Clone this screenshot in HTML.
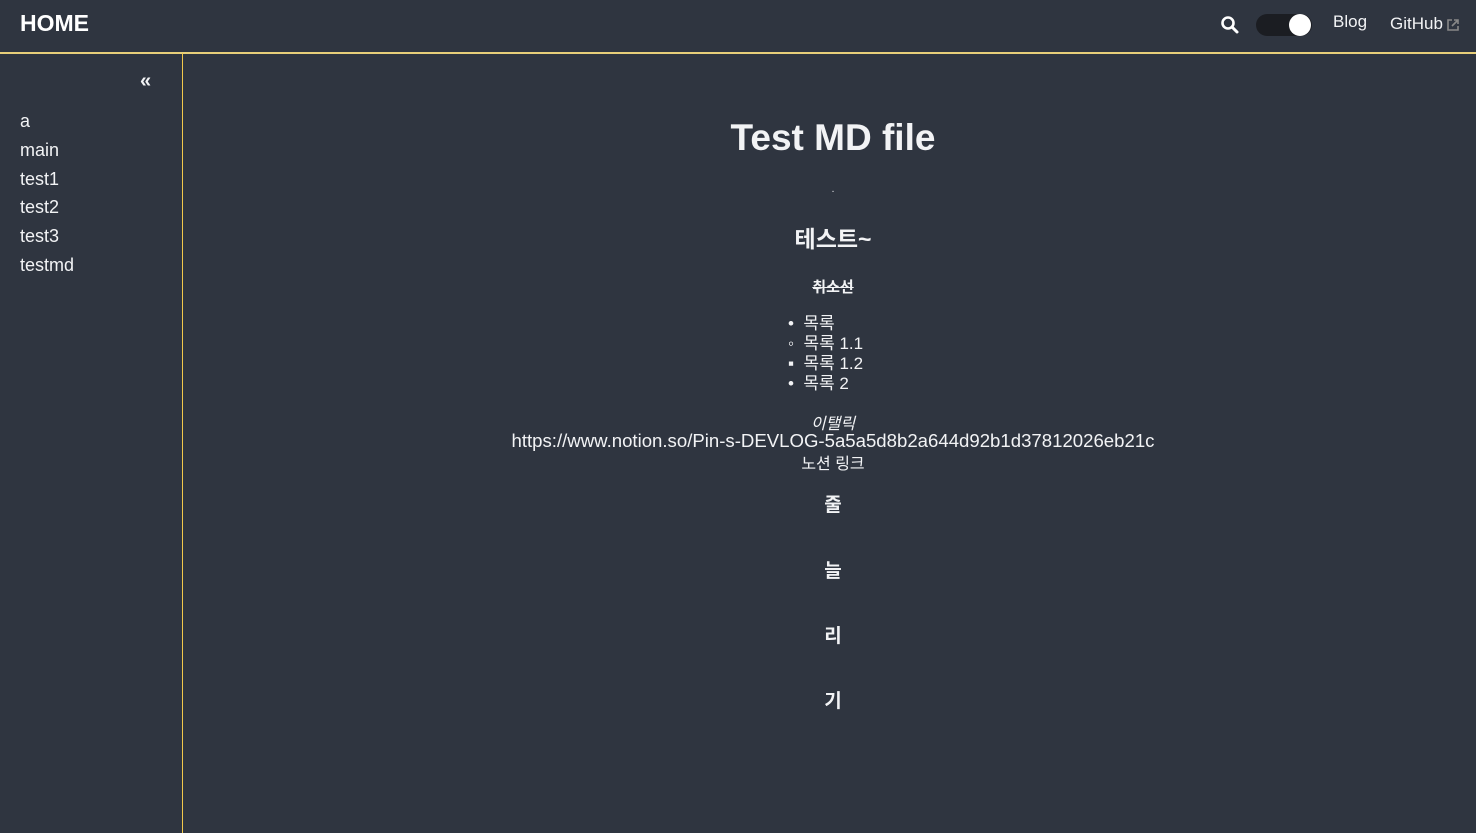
<!DOCTYPE html>
<html><head><meta charset="utf-8"><style>
*{margin:0;padding:0;box-sizing:border-box}
body{width:1476px;height:833px;background:#2f3540;color:#f2f3f5;font-family:"Liberation Sans","Noto Sans CJK KR",sans-serif;position:relative;overflow:hidden}
.a{position:absolute;white-space:nowrap}
.c{position:absolute;left:183px;width:1300px;text-align:center;white-space:nowrap}
</style></head><body>
<div class="a" style="left:20px;top:10px;font-size:23px;font-weight:bold;color:#fff">HOME</div>
<svg class="a" style="left:1220px;top:15px" width="20" height="20" viewBox="0 0 20 20"><circle cx="8" cy="8" r="5.5" fill="none" stroke="#fff" stroke-width="2.6"/><line x1="12" y1="12" x2="17" y2="17" stroke="#fff" stroke-width="3" stroke-linecap="round"/></svg>
<div class="a" style="left:1256px;top:14px;width:56px;height:22px;border-radius:11px;background:#1b1d22"></div>
<div class="a" style="left:1289px;top:14px;width:22px;height:22px;border-radius:50%;background:#fff"></div>
<div class="a" style="left:1333px;top:12px;font-size:17px">Blog</div>
<div class="a" style="left:1390px;top:14px;font-size:17px">GitHub</div>
<svg class="a" style="left:1446px;top:18px" width="14" height="14" viewBox="0 0 14 14" fill="none" stroke="#888" stroke-width="1.6"><path d="M6 2H2v10h10V8M8 2h4v4M12 2L6 8"/></svg>
<div class="a" style="left:0;top:52px;width:1476px;height:2px;background:#e8cf7a"></div>
<div class="a" style="left:182px;top:53px;width:1px;height:780px;background:#f2c94c"></div>
<div class="a" style="left:140px;top:70px;font-size:20px;font-weight:bold">«</div>
<div class="a" style="left:20px;top:107px;font-size:18px;line-height:28.8px">a<br>main<br>test1<br>test2<br>test3<br>testmd</div>
<div class="c" style="top:117px;font-size:37px;font-weight:bold">Test MD file</div>
<div class="c" style="top:184px;font-size:10px">.</div>
<div class="c" style="top:220px;font-size:23px;font-weight:bold">테스트~</div>
<div class="c" style="top:276px;font-size:15px;font-weight:bold"><s>취소선</s></div>
<div class="a" style="left:788px;top:314px;font-size:17px;line-height:20px">
<div>•&nbsp; 목록</div><div>◦&nbsp; 목록 1.1</div><div>▪&nbsp; 목록 1.2</div><div>•&nbsp; 목록 2</div></div>
<div class="c" style="top:410px;font-size:16px;font-style:italic">이탤릭</div>
<div class="c" style="top:430px;font-size:18.6px">https://www.notion.so/Pin-s-DEVLOG-5a5a5d8b2a644d92b1d37812026eb21c</div>
<div class="c" style="top:450px;font-size:16px">노션 링크</div>
<div class="c" style="top:490px;font-size:19px;font-weight:bold">줄</div>
<div class="c" style="top:556px;font-size:19px;font-weight:bold">늘</div>
<div class="c" style="top:621px;font-size:19px;font-weight:bold">리</div>
<div class="c" style="top:686px;font-size:19px;font-weight:bold">기</div>
</body></html>
